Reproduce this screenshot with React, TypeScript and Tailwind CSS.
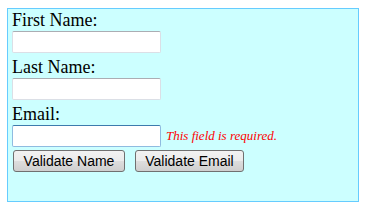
export default function App() {
  const serif = { fontFamily: '"Liberation Serif", "Times New Roman", serif' };
  const inputCls =
    "block w-[149px] h-[22px] bg-white rounded-[2px] border border-[#dbdfe6] border-t-[#abadb3] outline-none px-1 text-[13px]";
  const buttonCls =
    "h-[22px] rounded-[3px] border border-[#707070] bg-[linear-gradient(to_bottom,#f2f2f2_0%,#ebebeb_50%,#dddddd_51%,#cfcfcf_100%)] text-[14px] text-black leading-none";

  return (
    <div className="bg-white w-[368px] h-[205px] pt-[8px] pl-[7px]" style={serif}>
      <div className="w-[352px] h-[194px] border border-[#66ccff] bg-[#ccffff] pl-[4px]">
        <div className="text-[18px] leading-[22px] text-black">First Name:</div>
        <input className={`${inputCls} mb-[3px]`} />
        <div className="text-[18px] leading-[22px] text-black">Last Name:</div>
        <input className={`${inputCls} mb-[3px]`} />
        <div className="text-[18px] leading-[22px] text-black">Email:</div>
        <div className="flex items-center gap-[5px] mb-[3px]">
          <input className="block w-[149px] h-[22px] bg-white rounded-[2px] border border-[#8fbbe0] border-t-[#3d7bad] outline-none px-1 text-[13px]" />
          <span className="italic text-[13px] text-[#ff0000]">This field is required.</span>
        </div>
        <div className="flex gap-[10px] pl-[1px]" style={{ fontFamily: '"Liberation Sans", Arial, sans-serif' }}>
          <button type="button" className={`${buttonCls} w-[112px]`}>
            Validate Name
          </button>
          <button type="button" className={`${buttonCls} w-[109px]`}>
            Validate Email
          </button>
        </div>
      </div>
    </div>
  );
}
